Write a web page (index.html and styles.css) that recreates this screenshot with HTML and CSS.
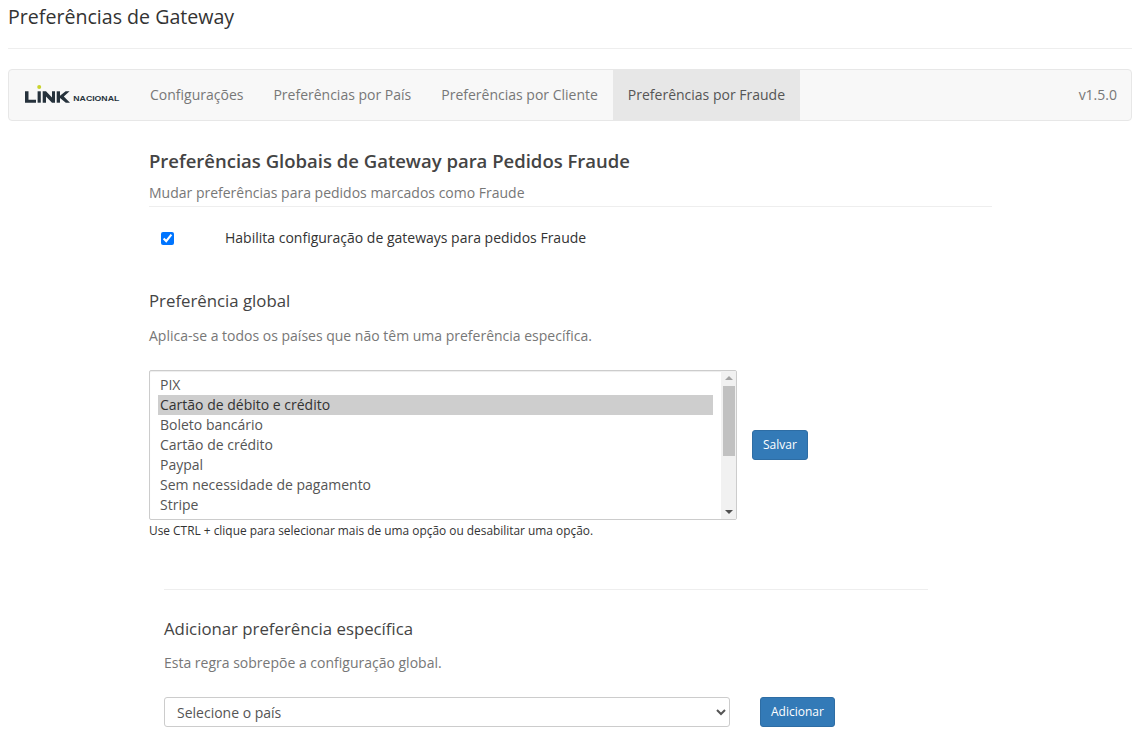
FILE: index.html
```html
<!DOCTYPE html>
<html lang="pt-BR">
<head>
  <meta charset="UTF-8">
  <title>Preferências de Gateway</title>
  <link rel="stylesheet" href="styles.css">
</head>
<body>
  <h1 class="page-title">Preferências de Gateway</h1>

  <nav class="navbar">
    <a class="brand" href="#">
      <svg width="96" height="22" viewBox="0 0 96 22">
        <circle cx="15.2" cy="3" r="2" fill="#c9d32c"/>
        <g fill="#26323c">
          <polygon points="1,7.3 4.5,7.3 4.5,15.8 12,15.8 12,18.7 1,18.7"/>
          <rect x="13.6" y="7.3" width="3.2" height="11.4"/>
          <polygon points="18.7,18.7 18.7,7.3 22,7.3 28,13.6 28,7.3 31,7.3 31,18.7 28,18.7 22,12.4 22,18.7"/>
          <rect x="32.7" y="7.3" width="3.3" height="11.4"/>
          <polygon points="36,11.8 41.6,7.3 45.6,7.3 39.8,12.6 46,18.7 41.8,18.7 36,14"/>
        </g>
        <text class="brand-sub" x="49.3" y="16.5" textLength="46" lengthAdjust="spacingAndGlyphs">NACIONAL</text>
      </svg>
    </a>
    <ul class="nav-tabs">
      <li><a href="#">Configurações</a></li>
      <li><a href="#">Preferências por País</a></li>
      <li><a href="#">Preferências por Cliente</a></li>
      <li class="active"><a href="#">Preferências por Fraude</a></li>
    </ul>
    <span class="version">v1.5.0</span>
  </nav>

  <main class="content">
    <h2 class="section-title">Preferências Globais de Gateway para Pedidos Fraude</h2>
    <p class="section-sub">Mudar preferências para pedidos marcados como Fraude</p>

    <label class="enable-row">
      <span class="enable-check"><input type="checkbox" checked></span>
      <span>Habilita configuração de gateways para pedidos Fraude</span>
    </label>

    <h3 class="block-title">Preferência global</h3>
    <p class="muted">Aplica-se a todos os países que não têm uma preferência específica.</p>

    <div class="list-row">
      <div class="list-box">
        <ul class="list-options">
          <li>PIX</li>
          <li class="selected">Cartão de débito e crédito</li>
          <li>Boleto bancário</li>
          <li>Cartão de crédito</li>
          <li>Paypal</li>
          <li>Sem necessidade de pagamento</li>
          <li>Stripe</li>
        </ul>
        <div class="scroll">
          <span class="arrow-up"></span>
          <div class="scroll-track"><div class="scroll-thumb"></div></div>
          <span class="arrow-down"></span>
        </div>
      </div>
      <button class="btn">Salvar</button>
    </div>
    <p class="hint">Use CTRL + clique para selecionar mais de uma opção ou desabilitar uma opção.</p>

    <section class="specific">
      <h3 class="block-title">Adicionar preferência específica</h3>
      <p class="muted">Esta regra sobrepõe a configuração global.</p>
      <div class="add-row">
        <select class="country">
          <option>Selecione o país</option>
        </select>
        <button class="btn">Adicionar</button>
      </div>
    </section>
  </main>
</body>
</html>
```

FILE: styles.css
```css
* { box-sizing: border-box; }
html, body { height: 746px; overflow: hidden; }
body {
  margin: 0;
  padding: 0 7px 0 8px;
  font-family: "Open Sans", sans-serif;
  font-size: 14px;
  color: #333;
  background: #fff;
}
.page-title {
  margin: 0 0 20px;
  padding: 4px 0 18px;
  height: 49px;
  font-size: 19.6px;
  line-height: 25px;
  font-weight: 400;
  border-bottom: 1px solid #eee;
}
.navbar {
  display: flex;
  align-items: stretch;
  height: 52px;
  background: #f8f8f8;
  border: 1px solid #e7e7e7;
  border-radius: 4px;
}
.brand {
  display: flex;
  align-items: center;
  width: 126px;
  padding-left: 15px;
}
.brand-sub {
  font-family: "Liberation Sans", sans-serif;
  font-size: 6.5px;
  font-weight: 700;
  fill: #26323c;
}
.nav-tabs {
  display: flex;
  margin: 0;
  padding: 0;
  list-style: none;
}
.nav-tabs a {
  display: block;
  padding: 15px;
  line-height: 20px;
  color: #777;
  text-decoration: none;
}
.nav-tabs .active a {
  color: #555;
  background: #e7e7e7;
  height: 50px;
}
.version {
  margin-left: auto;
  padding-right: 14px;
  line-height: 50px;
  color: #777;
}
.content {
  padding-left: 141px;
  padding-top: 27px;
}
.section-title {
  margin: 0;
  font-size: 18.5px;
  line-height: 26px;
  font-weight: 600;
  color: #444;
}
.section-sub {
  width: 843px;
  margin: 9px 0 0;
  padding-bottom: 3px;
  line-height: 20px;
  color: #777;
  font-size: 14px;
  border-bottom: 1px solid #eee;
}
.enable-row {
  display: flex;
  align-items: center;
  height: 22px;
  margin-top: 19px;
  color: #333;
}
.enable-check {
  display: flex;
  width: 76px;
  padding-left: 12px;
  padding-top: 2px;
}
.enable-check input {
  width: 13px;
  height: 13px;
  margin: 0;
}
.block-title {
  margin: 0;
  font-size: 16.8px;
  line-height: 22px;
  font-weight: 400;
  color: #444;
}
.content > .block-title { margin-top: 42px; }
.muted {
  margin: 14px 0 0;
  line-height: 20px;
  color: #777;
}
.list-row {
  display: flex;
  align-items: center;
  margin-top: 24px;
}
.list-box {
  display: flex;
  width: 588px;
  height: 150px;
  border: 1px solid #ccc;
  border-radius: 2px;
  box-shadow: inset 0 1px 1px rgba(0,0,0,.075);
  overflow: hidden;
}
.list-options {
  flex: 1;
  margin: 0;
  padding: 4px 8px 0;
  list-style: none;
  color: #555;
  line-height: 20px;
}
.list-options li { padding-left: 2px; padding-right: 2px; }
.list-options .selected { background: #cecece; color: #333; }
.scroll {
  display: flex;
  flex-direction: column;
  align-items: center;
  width: 15px;
  background: #f1f1f1;
}
.arrow-up, .arrow-down {
  flex: none;
  width: 0;
  height: 0;
  margin: 5px 0;
  border-left: 4px solid transparent;
  border-right: 4px solid transparent;
}
.arrow-up { margin-bottom: 6px; border-bottom: 4px solid #a3a3a3; }
.arrow-down { border-top: 4px solid #505050; }
.scroll-track {
  display: flex;
  justify-content: center;
  flex: 1;
  width: 100%;
}
.scroll-thumb { width: 12px; height: 70px; background: #c1c1c1; }
.btn {
  height: 30px;
  padding: 5px 10px;
  font-family: inherit;
  font-size: 12px;
  line-height: 18px;
  color: #fff;
  background: #337ab7;
  border: 1px solid #2e6da4;
  border-radius: 3px;
}
.list-row .btn { margin-left: 15px; }
.hint {
  margin: 2px 0 0;
  font-size: 11.9px;
  line-height: 17px;
  color: #333;
}
.specific {
  width: 764px;
  margin: 50px 0 0 15px;
  padding-top: 28px;
  border-top: 1px solid #eee;
}
.specific .muted { margin-top: 13px; }
.add-row {
  display: flex;
  align-items: center;
  gap: 30px;
  margin-top: 24px;
}
.country {
  width: 566px;
  height: 30px;
  padding: 0 8px;
  font-family: inherit;
  font-size: 14px;
  color: #555;
  background: #fff;
  border: 1px solid #ccc;
  border-radius: 3px;
}
```
